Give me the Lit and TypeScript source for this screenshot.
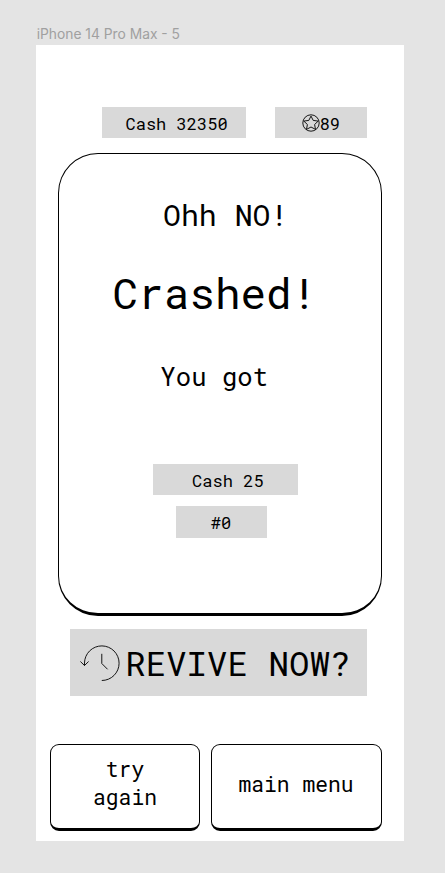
import { LitElement, html, css } from "lit";
import { customElement } from "lit/decorators.js";

@customElement("app-root")
export class AppRoot extends LitElement {
  static styles = css`
    :host {
      display: block;
      box-sizing: border-box;
      width: 445px;
      height: 873px;
      padding: 26px 41.4px 0 36.3px;
      background: #e4e4e4;
      color: #000;
      overflow: hidden;
      font-family: "Roboto Mono", "DejaVu Sans Mono", monospace;
    }
    * { box-sizing: border-box; }
    .label {
      height: 19px;
      line-height: 17px;
      padding-left: 0.4px;
      font-family: Inter, sans-serif;
      font-size: 13.8px;
      color: #a0a0a0;
      white-space: pre;
    }
    .frame {
      display: flex;
      flex-direction: column;
      height: 796px;
      padding: 62px 21.6px 0 21.5px;
      background: #fff;
    }
    .stats { display: flex; justify-content: flex-end; gap: 29px; padding-right: 15px; }
    .chip {
      display: flex;
      align-items: center;
      height: 31.3px;
      background: #d9d9d9;
      font-size: 17.07px;
      white-space: pre;
      padding-top: 2px;
    }
    .cash { width: 144.3px; padding-left: 23.7px; }
    .stars { width: 92px; padding-left: 26.5px; }
    .star { width: 18px; height: 18px; margin-top: -1px; }
    svg { display: block; flex: none; fill: none; stroke: #000; }
    .card {
      display: flex;
      flex-direction: column;
      height: 463px;
      margin-top: 14.7px;
      border: 1px solid #000;
      border-bottom-width: 3px;
      border-radius: 40px;
      white-space: pre;
    }
    .ohh { margin: 41px 0 0 104.2px; font-size: 29.87px; line-height: 39px; }
    .crashed { margin: 31px 0 0 53.7px; font-size: 42.67px; line-height: 56px; }
    .got { margin: 38px 0 0 101.7px; font-size: 25.6px; line-height: 34px; }
    .won { width: 144.5px; margin: 71px 0 0 94.6px; padding-left: 38.6px; padding-top: 1px; }
    .rank { width: 91.5px; margin: 11.2px 0 0 116.8px; padding-left: 35.2px; padding-top: 1px; }
    .revive {
      display: flex;
      align-items: center;
      width: 297px;
      height: 67px;
      margin: 13px 0 0 12.2px;
      padding-left: 9px;
      background: #d9d9d9;
      font-size: 34.14px;
      white-space: pre;
    }
    .clock { width: 46.2px; height: 40px; margin-top: 2px; }
    .revive span { padding-top: 1px; }
    .actions { display: flex; gap: 11px; margin: 48px 0 0 -7.8px; }
    .button {
      display: flex;
      align-items: center;
      justify-content: center;
      height: 87px;
      border: 1px solid #000;
      border-bottom-width: 3px;
      border-radius: 9px;
      font-size: 21.34px;
      line-height: 28.1px;
      text-align: center;
    }
    .again { width: 150px; padding-bottom: 7px; }
    .menu { width: 171px; padding: 0 1px 4px 0; }
  `;

  render() {
    return html`
      <div class="label">iPhone 14 Pro Max - 5</div>
      <main class="frame">
        <div class="stats">
          <div class="chip cash">Cash 32350</div>
          <div class="chip stars">
            <svg class="star" viewBox="0 0 18 18" stroke-width="0.9">
              <circle cx="9" cy="9" r="8.2"></circle>
              <path d="M9 2.1 L11.2 6.4 L16.2 7.1 L12.6 10.5 L13.5 15.4 L9 13 L4.5 15.4 L5.4 10.5 L1.8 7.1 L6.8 6.4Z"></path>
            </svg><span>89</span>
          </div>
        </div>
        <section class="card">
          <div class="ohh">Ohh NO!</div>
          <div class="crashed">Crashed!</div>
          <div class="got">You got</div>
          <div class="chip won">Cash 25</div>
          <div class="chip rank">#0</div>
        </section>
        <div class="revive">
          <svg class="clock" viewBox="0 0 46.2 40" stroke-width="0.9">
            <path d="M5.5 22.5 V20 A17.3 17.3 0 1 1 22.8 37.5 M1.4 18.5 L5.5 22.5 L9.6 18.5 M22.8 10.8 V20.5 L28.6 26.3"></path>
          </svg><span>REVIVE NOW?</span>
        </div>
        <div class="actions">
          <div class="button again">try<br />again</div>
          <div class="button menu">main menu</div>
        </div>
      </main>
    `;
  }
}
